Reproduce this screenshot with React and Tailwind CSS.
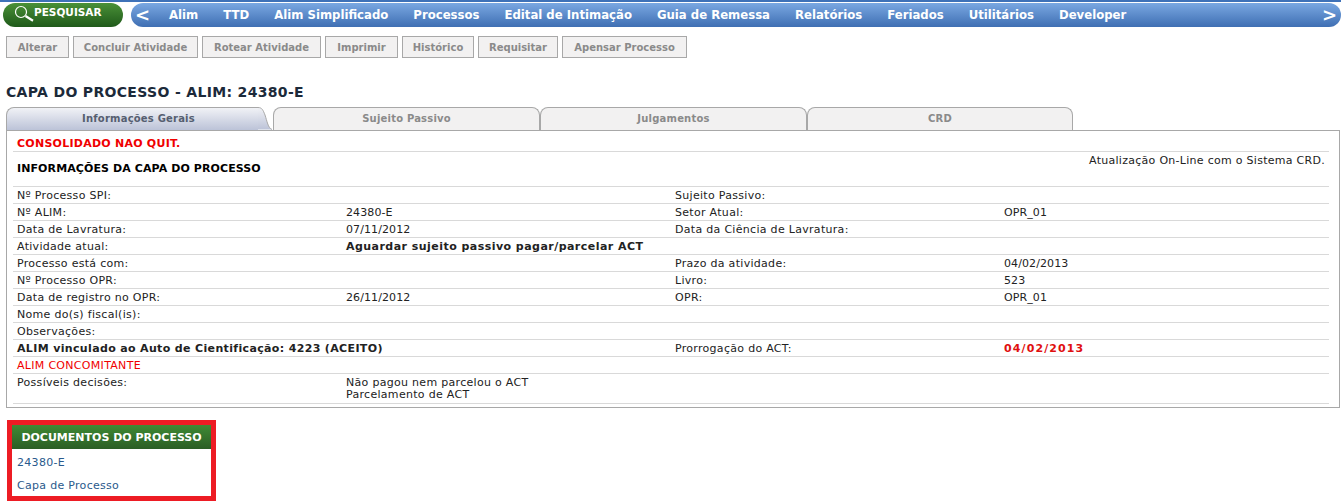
import React from 'react'

const menuItems = ['Alim', 'TTD', 'Alim Simplificado', 'Processos', 'Edital de Intimação', 'Guia de Remessa', 'Relatórios', 'Feriados', 'Utilitários', 'Developer']
const actions = [
  { label: 'Alterar', width: 'w-[63px]' },
  { label: 'Concluir Atividade', width: 'w-[125px]' },
  { label: 'Rotear Atividade', width: 'w-[119px]' },
  { label: 'Imprimir', width: 'w-[73px]' },
  { label: 'Histórico', width: 'w-[72px]' },
  { label: 'Requisitar', width: 'w-[80px]' },
  { label: 'Apensar Processo', width: 'w-[125px]' },
]

function Row({ a, b, c, d, bold, dClass = 'tracking-[0.1px]' }) {
  return (
    <div className="flex h-[17px] items-center pl-1 border-b border-[#d9d9d9]">
      {bold === 'a' ? (
        <span className="w-[658px] shrink-0 font-bold tracking-[0.35px]">{a}</span>
      ) : (
        <>
          <span className="w-[329px] shrink-0">{a}</span>
          <span className={`w-[329px] shrink-0 ${bold === 'b' ? 'font-bold whitespace-nowrap tracking-[0.46px]' : 'tracking-[0.1px]'}`}>{b}</span>
        </>
      )}
      <span className="w-[329px] shrink-0">{c}</span>
      <span className={dClass}>{d}</span>
    </div>
  )
}

function Tab({ label, active, width }) {
  if (active) {
    return (
      <div className="flex h-[23px] shrink-0" style={{ width }}>
        <div className="flex-1 flex items-center justify-center pl-[12px] rounded-tl-lg border-l border-t border-[#a8a8a8] bg-gradient-to-b from-[#f1f2f6] to-[#bcc3d8] font-bold text-[#555e70]">
          {label}
        </div>
        <svg width="14" height="23" viewBox="0 0 14 23" className="shrink-0">
          <defs>
            <linearGradient id="tabfill" x1="0" y1="0" x2="0" y2="1">
              <stop offset="0" stopColor="#f1f2f6" />
              <stop offset="1" stopColor="#bcc3d8" />
            </linearGradient>
          </defs>
          <path d="M0 0.5 C4 0.5 5 3 7 8 C9 14 10 21 14 22.5 L0 22.5 Z" fill="url(#tabfill)" />
          <path d="M0 0.5 C4 0.5 5 3 7 8 C9 14 10 21 14 22.5" fill="none" stroke="#a8a8a8" />
        </svg>
      </div>
    )
  }
  return (
    <div
      className="flex h-[23px] shrink-0 items-center justify-center rounded-t-lg border border-b-0 border-[#a8a8a8] bg-[#f2f1f1] font-bold text-[#8a8a8a]"
      style={{ width }}
    >
      {label}
    </div>
  )
}

export default function App() {
  return (
    <div className="w-[1341px] h-[501px] overflow-hidden bg-white border-t-2 border-[#3f72b8] font-['DejaVu_Sans',sans-serif] text-[11px] leading-none text-[#222] tracking-[0.3px]">
      <div className="flex gap-2 pl-[3px] pt-[1px]">
        <div className="flex items-start w-[120px] h-[24px] rounded-full bg-gradient-to-b from-[#4a9138] to-[#1f5a1a] pl-[9px] pt-[1px] text-white font-bold tracking-normal">
          <svg width="22" height="20" viewBox="0 0 22 20" fill="none" stroke="white" className="shrink-0">
            <circle cx="9" cy="8" r="5.5" strokeWidth="1.2" />
            <path d="M13.5 12 L21 16.7" strokeWidth="2.2" />
          </svg>
          <span className="text-[10.5px] mt-[3px]">PESQUISAR</span>
        </div>
        <div className="flex-1 flex items-center h-[24px] rounded-full bg-gradient-to-b from-[#7aa8e2] to-[#3f6fb3] text-white font-bold text-[11.7px] tracking-normal pl-[4px] pr-[4px]">
          <span className="text-[18px] font-bold w-[34px]">&lt;</span>
          <div className="flex gap-[25px] flex-1 pt-[1px]">
            {menuItems.map((item) => (
              <span key={item} className="whitespace-nowrap">{item}</span>
            ))}
          </div>
          <span className="text-[18px] font-bold">&gt;</span>
        </div>
      </div>

      <div className="flex gap-[4px] pl-[6px] mt-[9px]">
        {actions.map((a) => (
          <button key={a.label} className={`${a.width} h-[22px] pt-[2px] border border-[#a8a8a8] bg-[#f2f1f1] text-[10px] tracking-normal font-bold text-[#8a8a8a] whitespace-nowrap`}>
            {a.label}
          </button>
        ))}
      </div>

      <h1 className="pl-[6px] mt-[26px] text-[14px] leading-[17px] font-bold text-[#1c2a3a] tracking-[0.33px]">CAPA DO PROCESSO - ALIM: 24380-E</h1>

      <div className="flex pl-[6px] mt-[6px] text-[10px] tracking-[0.2px]">
        <Tab label="Informações Gerais" active width={266} />
        <div className="w-px" />
        <Tab label="Sujeito Passivo" width={267} />
        <Tab label="Julgamentos" width={267} />
        <Tab label="CRD" width={266} />
      </div>

      <div className="ml-[6px] w-[1334px] h-[278px] border border-[#a8a8a8] px-[6px]">
        <div className="w-[1316px]">
          <div className="h-[21px] flex items-center pl-1 pt-[5px] border-b border-[#d9d9d9] font-bold text-[#f00000] tracking-[0.25px]">CONSOLIDADO NAO QUIT.</div>
          <div className="relative h-[35px] flex items-start pl-1 pt-[11px] border-b border-[#d9d9d9] font-bold text-black tracking-[0.1px]">
            INFORMAÇÕES DA CAPA DO PROCESSO
            <span className="absolute right-[4px] top-[3px] font-normal text-[#222] tracking-[0.28px]">Atualização On-Line com o Sistema CRD.</span>
          </div>
          <Row a="Nº Processo SPI:" c="Sujeito Passivo:" />
          <Row a="Nº ALIM:" b="24380-E" c="Setor Atual:" d="OPR_01" />
          <Row a="Data de Lavratura:" b="07/11/2012" c="Data da Ciência de Lavratura:" />
          <Row a="Atividade atual:" b="Aguardar sujeito passivo pagar/parcelar ACT" bold="b" />
          <Row a="Processo está com:" c="Prazo da atividade:" d="04/02/2013" />
          <Row a="Nº Processo OPR:" c="Livro:" d="523" />
          <Row a="Data de registro no OPR:" b="26/11/2012" c="OPR:" d="OPR_01" />
          <Row a="Nome do(s) fiscal(is):" />
          <Row a="Observações:" />
          <Row a="ALIM vinculado ao Auto de Cientificação: 4223 (ACEITO)" bold="a" c="Prorrogação do ACT:" d="04/02/2013" dClass="font-bold text-[#e01010] tracking-[1.1px]" />
          <div className="h-[17px] flex items-center pl-1 border-b border-[#d9d9d9] text-[#f00000]">ALIM CONCOMITANTE</div>
          <div className="flex h-[30px] pl-1 pt-[3px] border-b border-[#d9d9d9]">
            <span className="w-[329px] shrink-0">Possíveis decisões:</span>
            <div className="flex flex-col gap-[1px]">
              <span>Não pagou nem parcelou o ACT</span>
              <span>Parcelamento de ACT</span>
            </div>
          </div>
        </div>
      </div>

      <div className="ml-[7px] mt-[12px] w-[209px] h-[81px] border-[5px] border-[#ed1c24]">
        <div className="h-[24px] flex items-center justify-center bg-gradient-to-b from-[#3f8a34] to-[#2b5e25] text-white font-bold tracking-normal">DOCUMENTOS DO PROCESSO</div>
        <div className="pl-[5px] pt-[8px] flex flex-col gap-[12px] text-[#2a5a8c]">
          <span>24380-E</span>
          <span>Capa de Processo</span>
        </div>
      </div>
    </div>
  )
}
